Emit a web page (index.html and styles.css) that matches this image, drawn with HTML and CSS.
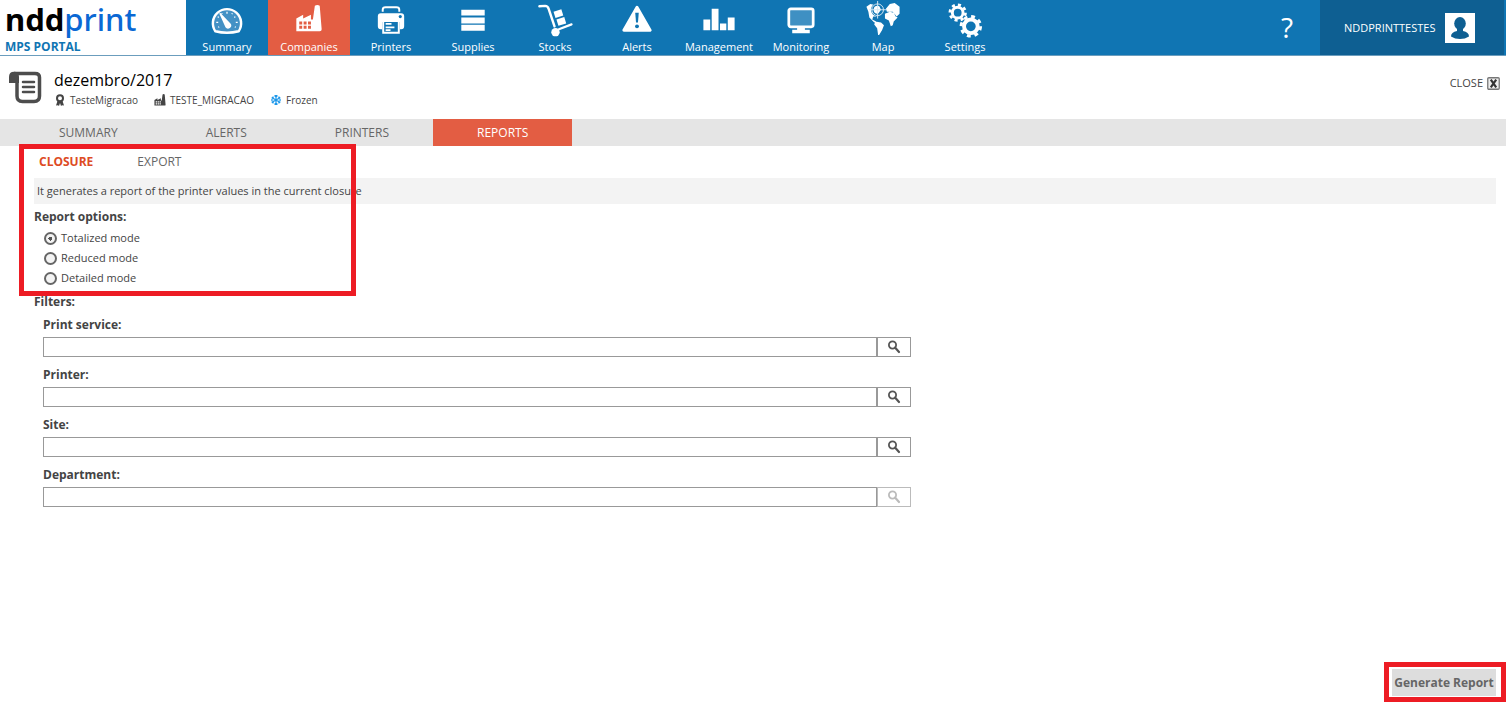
FILE: index.html
```html
<!DOCTYPE html>
<html lang="en">
<head>
    <meta charset="UTF-8">
    <meta name="viewport" content="width=device-width, initial-scale=1.0">
    <title>nddprint MPS Portal</title>
    <link rel="stylesheet" href="styles.css">
</head>
<body>
    <!-- shared icons -->
    <svg class="sprite" aria-hidden="true">
        <symbol id="search" viewBox="0 0 14 14">
            <circle cx="5.5" cy="5" r="3.6" fill="none" stroke="currentColor" stroke-width="1.8"/>
            <path d="M8 7.6l4 4.4" stroke="currentColor" stroke-width="2.2" stroke-linecap="round"/>
        </symbol>
        <symbol id="factory" viewBox="0 0 28 28">
            <path fill="currentColor" fill-rule="evenodd" d="M1 27V14l7-4v4l8-4v5h2L20 1q2.500-1.500 5 0l2 24q0 2-2 2zM4 17v3h3v-3zM8.500 17v3h3v-3zM13 17v3h3v-3zM4 21.500v3h3v-3zM8.500 21.500v3h3v-3zM13 21.500v3h3v-3z"/>
        </symbol>
    </svg>

    <header class="header">
        <div class="brand">
            <div class="logo"><span class="logo-dark">ndd</span>print</div>
            <div class="portal">MPS PORTAL</div>
        </div>
        <nav class="menu">
            <a href="#" class="menu-item">
                <svg class="menu-icon" viewBox="0 0 40 40">
                    <path d="M8 32a14.500 14.500 0 1 1 24 0q-12 3-24 0z" fill="#4391c5" stroke="#fff" stroke-width="2.500"/>
                    <path d="M13 14l10 10.500a2.500 2.500 0 0 1-4 3z" fill="#fff" stroke="#fff" stroke-width="1.500" stroke-linejoin="round"/>
                    <path d="M9 23h2M29 23h2M20 12v2M14.500 13.500l.5 1M25.500 13.500l-.5 1M28.500 17l-1 1M10.500 17l1 1M11 28l1-.5M28 27.500l1 .5" stroke="#fff" stroke-width="1.300"/>
                </svg>
                Summary
            </a>
            <a href="#" class="menu-item active">
                <svg class="menu-icon" viewBox="0 0 40 40"><use href="#factory" x="6" y="5" width="28" height="28"/></svg>
                Companies
            </a>
            <a href="#" class="menu-item">
                <svg class="menu-icon" viewBox="0 0 40 40">
                    <path d="M11.500 12V10q0-2.500 3-2.500h11q3 0 3 2.500v2" fill="none" stroke="#fff" stroke-width="2"/>
                    <path d="M9.500 13.500h21q3 0 3 3V27q0 3-3 3h-1.500v-7.500H11V30H9.500q-3 0-3-3V16.500q0-3 3-3z" fill="#fff"/>
                    <circle cx="29.500" cy="17" r="1.600" fill="#1075b3"/>
                    <path d="M12 22.500v11h16v-11" fill="none" stroke="#fff" stroke-width="2"/>
                    <path d="M14.500 24.500h6M14.500 28h9M14.500 31h5" stroke="#fff" stroke-width="1.800"/>
                </svg>
                Printers
            </a>
            <a href="#" class="menu-item">
                <svg class="menu-icon" viewBox="0 0 40 40"><path d="M8 10h24v6H8zM8 18h24v6H8zM8 25.500h24v6H8z" fill="#fff"/></svg>
                Supplies
            </a>
            <a href="#" class="menu-item">
                <svg class="menu-icon" viewBox="0 0 40 40">
                    <path d="M4 6.500l6-.5q2.500 0 3.500 3l6 18" fill="none" stroke="#fff" stroke-width="2.500" stroke-linecap="round"/>
                    <path d="M18.500 12l8-2.500 2 6.500-8 2.500zM21.500 20l8-2.500 2 6.500-8 2.500z" fill="#fff"/>
                    <path d="M24 30l13-5" stroke="#fff" stroke-width="2.200" stroke-linecap="round"/>
                    <circle cx="20.500" cy="33" r="4.300" fill="#fff"/>
                </svg>
                Stocks
            </a>
            <a href="#" class="menu-item">
                <svg class="menu-icon" viewBox="0 0 40 40">
                    <path d="M20 7.500L33.500 31h-27z" fill="#fff" stroke="#fff" stroke-width="3" stroke-linejoin="round"/>
                    <path d="M18.200 13h3.600L21 23h-2z" fill="#1075b3"/>
                    <circle cx="20" cy="27" r="2" fill="#1075b3"/>
                </svg>
                Alerts
            </a>
            <a href="#" class="menu-item">
                <svg class="menu-icon" viewBox="0 0 40 40"><path d="M4 20h7v11H4zM12.500 9h7v22h-7zM21 24h6.500v7H21zM29 18h7v13h-7z" fill="#fff"/></svg>
                Management
            </a>
            <a href="#" class="menu-item">
                <svg class="menu-icon" viewBox="0 0 40 40">
                    <rect x="7.500" y="9" width="25" height="18.500" rx="2" fill="#3f90c3" stroke="#fff" stroke-width="2.800"/>
                    <path d="M16 28h8v2.500h5V34H11v-3.500h5z" fill="#fff"/>
                </svg>
                Monitoring
            </a>
            <a href="#" class="menu-item">
                <svg class="menu-icon" viewBox="0 0 40 40">
                    <path d="M3 7l4-3 9 2 2 4-3 4-2 3h-3l-1 3 4 2-2 1-5-5-1-6zM12 22l6 1 3 3-2 5-3 5h-1l-1-7-3-4zM22 14l5-2 4 1 2 4 2 1-4 4-1 4-2 1-2-6-4-2zM23 9l4-5 5-1 5 4v7l-3 3-4-5h-6z" fill="#fff"/>
                    <circle cx="14.500" cy="10" r="5.500" fill="none" stroke="#1075b3" stroke-width="2.800"/>
                    <circle cx="14.500" cy="10" r="6" fill="none" stroke="#d5e7f3" stroke-width="1"/>
                    <path d="M14.500 1v18M6 10h17" stroke="#d5e7f3" stroke-width="1"/>
                </svg>
                Map
            </a>
            <a href="#" class="menu-item">
                <svg class="menu-icon" viewBox="0 0 40 40">
                    <g fill="none" stroke="#fff">
                        <circle cx="12.500" cy="13" r="5.500" stroke-width="3"/>
                        <circle cx="12.500" cy="13" r="8" stroke-width="2.800" stroke-dasharray="3.140 3.140"/>
                        <circle cx="26" cy="27" r="7" stroke-width="4"/>
                        <circle cx="26" cy="27" r="10" stroke-width="3" stroke-dasharray="3.927 3.927"/>
                    </g>
                </svg>
                Settings
            </a>
        </nav>
        <a href="#" class="help" aria-label="Help">?</a>
        <a href="#" class="user">
            NDDPRINTTESTES
            <svg class="avatar" viewBox="0 0 30 30">
                <path d="M0 0h30v30H0z" fill="#fff"/>
                <ellipse cx="15" cy="10.500" rx="5.800" ry="6.500" fill="#0e5f92"/>
                <path d="M12 15h6v3q6 1 6 5.500Q20 26 15 26t-9-2.500Q6 19 12 18z" fill="#0e5f92"/>
            </svg>
        </a>
    </header>

    <section class="title-bar">
        <svg class="title-icon" viewBox="0 0 34 34">
            <path d="M6 3.500h21q4.500 0 4.500 4V26q0 5.500-5.500 5.500H14.500q-5.500 0-5.500-5.500V13" fill="none" stroke="#4d4d4d" stroke-width="3.500"/>
            <path d="M1 13V7q0-5.200 5-5.200T11 7v6z" fill="#4d4d4d"/>
            <path d="M15 12h11M15 17h11M15 22h11" stroke="#4d4d4d" stroke-width="2.500" stroke-linecap="round"/>
        </svg>
        <div class="title-text">
            <h1>dezembro/2017</h1>
            <ul class="info">
                <li>
                    <svg class="info-icon" viewBox="0 0 12 12">
                        <path d="M3.500 7L2 11.500l2-.3 1 .8 1-3 1 3 1-.8 2 .3L8.500 7z" fill="#444"/>
                        <circle cx="6" cy="4.300" r="3" fill="#fff" stroke="#444" stroke-width="2"/>
                    </svg>
                    TesteMigracao
                </li>
                <li><svg class="info-icon"><use href="#factory"/></svg>TESTE_MIGRACAO</li>
                <li>
                    <svg class="info-icon frozen" viewBox="0 0 12 12">
                        <path d="M6 1v10M1.700 3.500l8.600 5M1.700 8.500l8.600-5M4.500 1.500L6 3l1.500-1.500M4.500 10.500L6 9l1.500 1.500M1.300 5.500l2-.8-.3-2.200M10.700 5.500l-2-.8.3-2.200M1.300 6.500l2 .8-.3 2.200M10.700 6.500l-2 .8.3 2.200" fill="none" stroke="currentColor" stroke-width="1.200"/>
                    </svg>
                    Frozen
                </li>
            </ul>
        </div>
        <button type="button" class="close">
            CLOSE
            <svg class="close-icon" viewBox="0 0 12 12">
                <rect x=".7" y=".7" width="10.600" height="10.600" rx="1" fill="#eee" stroke="#777" stroke-width="1.200"/>
                <path d="M3.500 2.500l5 7M8.500 2.500l-5 7" stroke="#333" stroke-width="2"/>
            </svg>
        </button>
    </section>

    <nav class="tabs">
        <a href="#">SUMMARY</a>
        <a href="#">ALERTS</a>
        <a href="#">PRINTERS</a>
        <a href="#" class="active">REPORTS</a>
    </nav>

    <main class="content">
        <div class="report">
            <nav class="subtabs">
                <a href="#" class="active">CLOSURE</a>
                <a href="#">EXPORT</a>
            </nav>
            <p class="description">It generates a report of the printer values in the current closure</p>
            <fieldset class="options">
                <legend>Report options:</legend>
                <label><input type="radio" name="mode" checked>Totalized mode</label>
                <label><input type="radio" name="mode">Reduced mode</label>
                <label><input type="radio" name="mode">Detailed mode</label>
            </fieldset>
            <div class="frame"></div>
        </div>

        <form class="filters">
            <h2>Filters:</h2>
            <label for="service">Print service:</label>
            <div class="field">
                <input type="text" id="service">
                <button type="button" aria-label="Search print service"><svg><use href="#search"/></svg></button>
            </div>
            <label for="printer">Printer:</label>
            <div class="field">
                <input type="text" id="printer">
                <button type="button" aria-label="Search printer"><svg><use href="#search"/></svg></button>
            </div>
            <label for="site">Site:</label>
            <div class="field">
                <input type="text" id="site">
                <button type="button" aria-label="Search site"><svg><use href="#search"/></svg></button>
            </div>
            <label for="department">Department:</label>
            <div class="field">
                <input type="text" id="department">
                <button type="button" aria-label="Search department" disabled><svg><use href="#search"/></svg></button>
            </div>
        </form>
    </main>

    <footer class="footer">
        <div class="generate-box">
            <button type="button" class="generate">Generate Report</button>
        </div>
    </footer>
</body>
</html>
```
FILE: styles.css
```css
* {
    box-sizing: border-box;
}
body {
    margin: 0;
    min-height: 100vh;
    display: flex;
    flex-direction: column;
    background: #fff;
    color: #444;
    font-family: "Open Sans", "Noto Sans", sans-serif;
    font-size: 11px;
    line-height: 16px;
}
a {
    color: inherit;
    text-decoration: none;
}
button, input {
    font: inherit;
    color: inherit;
}
.sprite {
    display: none;
}

/* header */
.header {
    display: flex;
    height: 56px;
    background: #1075b3;
    border-bottom: 1px solid #6b9dbd;
    color: #fff;
}
.brand {
    width: 186px;
    padding-left: 5px;
    background: #fff;
}
.logo {
    height: 39px;
    color: #0a68d4;
    font-family: "Noto Sans", sans-serif;
    font-size: 31px;
    font-weight: 500;
    line-height: 38px;
}
.logo-dark {
    color: #000;
    font-weight: bold;
}
.portal {
    color: #1075b3;
    font-size: 12px;
    font-weight: bold;
}
.menu {
    display: flex;
    flex: 1;
}
.menu-item {
    width: 82px;
    display: flex;
    flex-direction: column;
    align-items: center;
}
.menu-item.active {
    background: #e35d43;
}
.menu-icon {
    width: 40px;
    height: 41px;
}
.help {
    width: 66px;
    font-size: 28px;
    line-height: 55px;
    text-align: center;
}
.user {
    width: 186px;
    display: flex;
    align-items: center;
    gap: 10px;
    padding-left: 24px;
    background: #0e5f92;
    border-right: 2px solid #1075b3;
}
.avatar {
    width: 30px;
    height: 30px;
}

/* title */
.title-bar {
    display: flex;
    align-items: flex-start;
    height: 63px;
    padding: 12px 6px 0 8px;
}
.title-icon {
    width: 34px;
    height: 34px;
    margin-top: 2px;
}
.title-text {
    flex: 1;
    padding-left: 12px;
}
h1 {
    margin: 0;
    color: #000;
    font-size: 16px;
    font-weight: normal;
    line-height: 24px;
}
.info {
    display: flex;
    gap: 16px;
    margin: 0;
    padding: 0;
    list-style: none;
    font-size: 10px;
}
.info li {
    display: flex;
    align-items: center;
    gap: 4px;
}
.info-icon {
    width: 12px;
    height: 12px;
}
.frozen {
    color: #1c97ea;
}
.close {
    display: flex;
    align-items: center;
    gap: 4px;
    margin-top: 7px;
    padding: 0;
    border: 0;
    background: none;
    cursor: pointer;
}
.close-icon {
    width: 13px;
    height: 13px;
}

/* tabs */
.tabs {
    display: flex;
    padding-left: 15px;
    background: #e5e5e5;
    color: #666;
    font-size: 12px;
    line-height: 27px;
}
.tabs a {
    padding: 0 44px;
}
.tabs .active {
    background: #e35d43;
    color: #fff;
}

/* content */
.content {
    flex: 1;
    padding: 0 10px 0 34px;
}
.report {
    position: relative;
}
.subtabs {
    display: flex;
    gap: 44px;
    padding-left: 5px;
    color: #666;
    font-size: 12px;
    line-height: 32px;
}
.subtabs .active {
    color: #dd4b24;
    font-weight: bold;
}
.description {
    margin: 0;
    padding-left: 3px;
    background: #f3f3f3;
    line-height: 26px;
}
.options {
    margin: 0;
    padding: 5px 0 0;
    border: 0;
}
.options legend, .filters h2 {
    margin: 0;
    padding: 0;
    font-size: 12px;
    font-weight: bold;
    line-height: 16px;
}
.options legend {
    float: left;
    width: 100%;
    margin-bottom: 3px;
}
.options label {
    clear: both;
    display: flex;
    align-items: center;
    gap: 4px;
    height: 20px;
    padding-left: 10px;
}
.options input {
    appearance: none;
    width: 13px;
    height: 13px;
    margin: 0;
    border: 2px solid #666;
    border-radius: 50%;
    background: #f3f3f3;
}
.options input:checked {
    background: radial-gradient(circle, #555 0 2px, #f3f3f3 2px);
}
.frame {
    position: absolute;
    top: -2px;
    left: -15px;
    width: 337px;
    height: 152px;
    border: 5px solid #ed1c24;
    pointer-events: none;
}
.filters {
    max-width: 877px;
    padding-top: 6px;
}
.filters h2 {
    margin-bottom: 6px;
}
.filters label {
    display: block;
    padding-left: 9px;
    font-size: 12px;
    font-weight: bold;
    line-height: 18px;
}
.field {
    display: flex;
    height: 20px;
    margin: 3px 0 9px 9px;
}
.field input {
    flex: 1;
    min-width: 0;
    padding: 0 4px;
    border: 1px solid #999;
    background: #fff;
}
.field button {
    width: 34px;
    padding: 0;
    border: 1px solid #999;
    background: #fff;
    color: #555;
    cursor: pointer;
}
.field button:disabled {
    border-color: #bbb;
    color: #bbb;
    cursor: default;
}
.field svg {
    display: block;
    width: 14px;
    height: 14px;
    margin: 0 auto;
}

/* footer */
.footer {
    display: flex;
    justify-content: flex-end;
    padding-bottom: 1px;
}
.generate-box {
    padding: 2px 5px 1px 3px;
    border: 5px solid #ed1c24;
}
.generate {
    width: 104px;
    height: 27px;
    padding: 0;
    border: 0;
    background: #ddd;
    color: #666;
    font-size: 12px;
    font-weight: bold;
    cursor: pointer;
}
```
